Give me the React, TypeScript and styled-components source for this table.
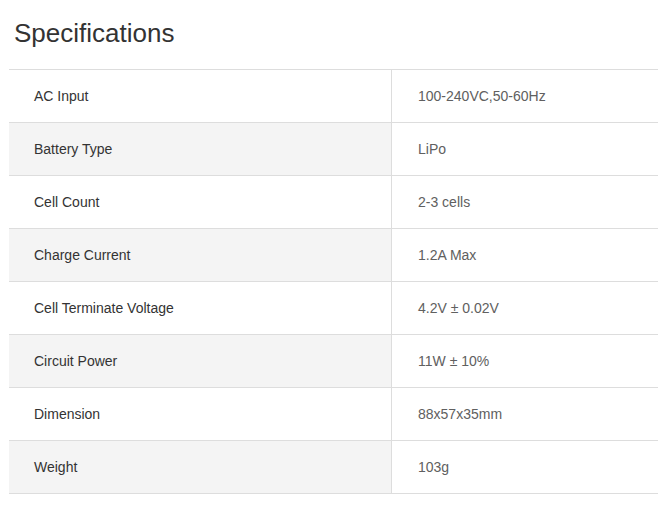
import React from "react";
import styled, { createGlobalStyle } from "styled-components";

const Global = createGlobalStyle`
  html, body { margin: 0; padding: 0; background: #fff; }
  body { font-family: "Liberation Sans", Arial, sans-serif; }
`;

const Page = styled.div`
  padding: 0 0 0 9px;
  width: 658px;
  box-sizing: border-box;
`;

const Title = styled.h2`
  margin: 0;
  padding: 18px 0 0 5px;
  height: 69px;
  box-sizing: border-box;
  font-size: 26px;
  line-height: 30px;
  font-weight: 400;
  color: #333;
`;

const Table = styled.div`
  display: grid;
  grid-template-columns: 382px 1fr;
  border-top: 1px solid #ddd;
`;

const Cell = styled.div<{ $shade?: boolean; $value?: boolean }>`
  height: 52px;
  display: flex;
  align-items: center;
  box-sizing: content-box;
  border-bottom: 1px solid #ddd;
  border-left: ${(p) => (p.$value ? "1px solid #ddd" : "none")};
  padding-left: ${(p) => (p.$value ? "26px" : "25px")};
  background: ${(p) => (p.$shade ? "#f4f4f4" : "#fff")};
  font-size: 14px;
  color: ${(p) => (p.$value ? "#606060" : "#333")};
`;

const rows: [string, string][] = [
  ["AC Input", "100-240VC,50-60Hz"],
  ["Battery Type", "LiPo"],
  ["Cell Count", "2-3 cells"],
  ["Charge Current", "1.2A Max"],
  ["Cell Terminate Voltage", "4.2V ± 0.02V"],
  ["Circuit Power", "11W ± 10%"],
  ["Dimension", "88x57x35mm"],
  ["Weight", "103g"],
];

export default function App() {
  return (
    <Page>
      <Global />
      <Title>Specifications</Title>
      <Table>
        {rows.map(([k, v], i) => (
          <React.Fragment key={k}>
            <Cell $shade={i % 2 === 1}>{k}</Cell>
            <Cell $value>{v}</Cell>
          </React.Fragment>
        ))}
      </Table>
    </Page>
  );
}
